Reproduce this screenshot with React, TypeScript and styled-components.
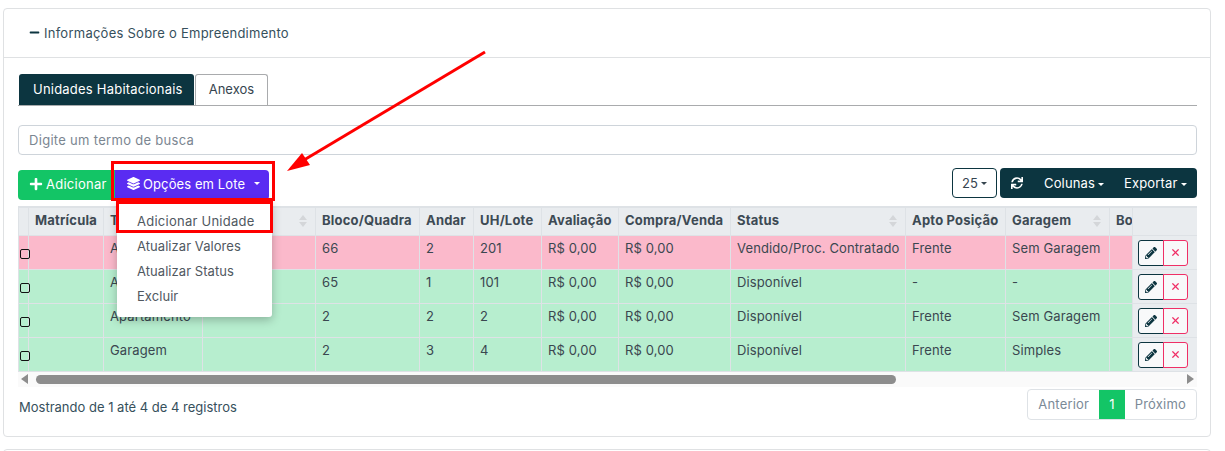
import React from "react";
import styled, { createGlobalStyle } from "styled-components";
import { FaLayerGroup, FaPencilAlt, FaPlus, FaSync, FaMinus } from "react-icons/fa";
import { X } from "lucide-react";

const Global = createGlobalStyle`
  html, body { margin: 0; padding: 0; background: #fff; }
  body { font-family: Inter, "Open Sans", sans-serif; font-size: 13px; color: #36454f; overflow: hidden; }
  * { box-sizing: border-box; }
`;
const Page = styled.div`
  position: relative; width: 1225px; height: 451px; overflow: hidden;
  padding: 8px 14px 0 3px;
`;
const Card = styled.section`
  border: 1px solid #dfe1e3; border-radius: 4px; height: 429px; background: #fff;
`;
const NextCard = styled(Card)`margin-top: 12px;`;
const CardHeader = styled.header`
  height: 49px; border-bottom: 1px solid #dfe1e3; display: flex; align-items: center;
  padding: 0 0 1px 25px; gap: 4px; color: #36505c; font-size: 13px; letter-spacing: .25px;
  svg { color: #0c3540; font-size: 11px; }
`;
const CardBody = styled.div`padding: 16px 13px 0 14px;`;
const Tabs = styled.div`
  display: flex; height: 32px; border-bottom: 1px solid #a9abad; gap: 1px; padding-left: 1px;
`;
const Tab = styled.div<{ $active?: boolean }>`
  height: 31px; display: flex; align-items: center; padding: 0 13px 2px;
  font-size: 13px; letter-spacing: .22px; border-radius: 3px 3px 0 0;
  ${p => p.$active ? "background:#0c3540;color:#fff;padding:0 11px 2px 14px;" : "border:1px solid #a9abad;border-bottom:0;color:#36454f;letter-spacing:0;"}
`;
const Search = styled.div`
  margin-top: 19px; height: 30px; border: 1px solid #ced4da; border-radius: 4px;
  padding: 0 10px 1px; display: flex; align-items: center; color: #7b8691; font-size: 13px; letter-spacing: .3px;
`;
const Toolbar = styled.div`
  margin-top: 13px; height: 32px; display: flex; justify-content: space-between;
`;
const LeftGroup = styled.div`display: flex; align-items: flex-end;`;
const RightGroup = styled.div`display: flex; align-items: flex-start;`;
const AddBtn = styled.div`
  width: 97px; height: 30px; background: #13c566; color: #fff; border-radius: 4px 0 0 4px;
  display: flex; align-items: center; padding: 0 0 3px 11px; gap: 3px; font-size: 13px; letter-spacing: .25px;
  svg { font-size: 14px; }
`;
const BatchBtn = styled.div`
  width: 154px; height: 30px; background: #5a2cf2; color: #fff; border-radius: 0 4px 4px 0;
  display: flex; align-items: center; padding: 0 0 3px 12px; gap: 3px; font-size: 13px; letter-spacing: .1px;
  svg { font-size: 13px; }
`;
const Caret = styled.i`
  display: inline-block; width: 0; height: 0; border: 3px solid transparent; border-top-color: currentColor;
  border-bottom: 0; margin-left: 3px; vertical-align: 2px;
`;
const BatchCaret = styled(Caret)`margin-left: 6px;`;
const PageSize = styled.div`
  width: 45px; height: 30px; border: 1px solid #0c3540; border-radius: 4px; display: flex;
  align-items: center; justify-content: center; font-size: 13px; margin-right: 3px; color: #36454f;
`;
const DarkGroup = styled.div`
  width: 197px; height: 30px; background: #0c3540; border-radius: 4px; color: #fff; display: flex;
  align-items: center; font-size: 13px; padding-left: 11px; white-space: nowrap; letter-spacing: .15px;
  svg { font-size: 12px; margin-right: 21px; flex-shrink: 0; }
  span { margin-right: 20px; flex-shrink: 0; }
  span:last-child { margin-right: 0; }
`;
const TableWrap = styled.div`margin-top: 6px; width: 1179px; overflow: hidden;`;
const Grid = styled.table`
  border-collapse: collapse; table-layout: fixed; width: 1179px; font-size: 13px;
`;
const Th = styled.th<{ $sort?: boolean }>`
  height: 28px; background: #e9ecef; border: 1px solid #dee2e6; border-top: 2px solid #dee2e6; text-align: left;
  padding: 0 6px 2px; font-weight: 700; font-size: 13px; color: #3d4a54; white-space: nowrap; overflow: hidden;
  position: relative; letter-spacing: .2px;
  ${p => p.$sort ? `
  &::after { content: ""; position: absolute; right: 8px; top: 7px; border: 4px solid transparent; border-top: 0; border-bottom: 5px solid rgba(0,0,0,.09); }
  &::before { content: ""; position: absolute; right: 8px; top: 14px; border: 4px solid transparent; border-bottom: 0; border-top: 5px solid rgba(0,0,0,.09); }` : ""}
`;
const Tr = styled.tr<{ $color: string }>`background: ${p => p.$color};`;
const Td = styled.td`
  height: 34px; border: 1px solid #dee2e6; padding: 0 6px 8px; color: #3a4750; white-space: nowrap; overflow: hidden; font-size: 13px;
  letter-spacing: .12px;
`;
const CheckCell = styled.td`
  height: 34px; border: 1px solid #dee2e6; padding: 0; vertical-align: bottom;
`;
const Check = styled.div`
  position: relative; z-index: 1;
  width: 10px; height: 10px; border: 1.5px solid #111; border-radius: 2px; margin: 0 0 10px 1px;
`;
const ActionCell = styled.td`
  height: 34px; border: 1px solid #dee2e6; background: #e9ecef; padding: 4px 0 0 5px; vertical-align: top;
`;
const Actions = styled.div`display: flex; width: 50px; height: 26px;`;
const EditBtn = styled.div`
  width: 26px; height: 26px; background: #f8f9fa; border: 1px solid #0c3540; border-radius: 3px 0 0 3px;
  display: flex; align-items: center; justify-content: center; color: #0c3540; font-size: 12px;
`;
const DelBtn = styled.div`
  width: 25px; height: 26px; background: #f8f9fa; border: 1px solid #ef2f66; border-radius: 0 3px 3px 0;
  display: flex; align-items: center; justify-content: center; color: #ef2f66; margin-left: -1px;
`;
const Scrollbar = styled.div`
  height: 15px; background: #fafafa; display: flex; align-items: center; padding: 0 3px; gap: 8px;
`;
const ScrollArrow = styled.i<{ $right?: boolean }>`
  width: 0; height: 0; border-style: solid; border-width: 5px 0;
  border-color: transparent #8d8d8d;
  ${p => p.$right ? "border-left-width: 7px; margin-left: auto;" : "border-right-width: 7px;"}
`;
const Thumb = styled.div`width: 860px; height: 9px; background: #8d8d8d; border-radius: 5px;`;
const Footer = styled.div`display: flex; justify-content: space-between; align-items: flex-start; margin-top: 2px;`;
const Info = styled.div`padding: 10px 0 0 1px; font-size: 13px; color: #36505c;`;
const Pager = styled.div`
  display: flex; height: 31px; border: 1px solid #dee2e6; border-radius: 4px; overflow: hidden; color: #7b8a97; font-size: 13px;
  letter-spacing: .2px;
`;
const PageLink = styled.div<{ $active?: boolean }>`
  display: flex; align-items: center; padding: 0 10px;
  ${p => p.$active ? "background:#13c566;color:#fff;" : ""}
`;
const Menu = styled.div`
  position: absolute; left: 117px; top: 201px; width: 155px; height: 116px; background: #fff;
  border-radius: 0 0 3px 3px; box-shadow: 0 3px 10px rgba(0,0,0,.25); padding: 7px 0 0 20px; z-index: 2;
`;
const MenuItem = styled.div`height: 25px; display: flex; align-items: center; font-size: 13px; color: #50585f; letter-spacing: .05px;`;
const FirstItem = styled(MenuItem)`letter-spacing: .25px;`;
const Mark = styled.div<{ $l: number; $t: number; $w: number; $h: number }>`
  position: absolute; left: ${p => p.$l}px; top: ${p => p.$t}px; width: ${p => p.$w}px; height: ${p => p.$h}px;
  border: 3px solid #f00; z-index: 3; pointer-events: none;
`;
const Arrow = styled.svg`position: absolute; left: 270px; top: 40px; z-index: 3;`;

const cols = [10, 75, 99, 113, 104, 54, 68, 77, 112, 175, 100, 104, 23, 65];
const heads: [string, boolean][] = [["", false], ["Matrícula", true], ["Tipo", true], ["Imóvel", true], ["Bloco/Quadra", false], ["Andar", false], ["UH/Lote", false], ["Avaliação", false], ["Compra/Venda", false], ["Status", true], ["Apto Posição", true], ["Garagem", true], ["Bo", false], ["", false]];
const rows: { c: string; cells: string[] }[] = [
  { c: "#fbb9cb", cells: ["", "Apartamento", "", "66", "2", "201", "R$ 0,00", "R$ 0,00", "Vendido/Proc. Contratado", "Frente", "Sem Garagem", ""] },
  { c: "#b7eecf", cells: ["", "Apartamento", "", "65", "1", "101", "R$ 0,00", "R$ 0,00", "Disponível", "-", "-", ""] },
  { c: "#b7eecf", cells: ["", "Apartamento", "", "2", "2", "2", "R$ 0,00", "R$ 0,00", "Disponível", "Frente", "Sem Garagem", ""] },
  { c: "#b7eecf", cells: ["", "Garagem", "", "2", "3", "4", "R$ 0,00", "R$ 0,00", "Disponível", "Frente", "Simples", ""] },
];

export default function App() {
  return (
    <Page>
      <Global />
      <Card>
        <CardHeader><FaMinus /> Informações Sobre o Empreendimento</CardHeader>
        <CardBody>
          <Tabs>
            <Tab $active>Unidades Habitacionais</Tab>
            <Tab>Anexos</Tab>
          </Tabs>
          <Search>Digite um termo de busca</Search>
          <Toolbar>
            <LeftGroup>
              <AddBtn><FaPlus /> Adicionar</AddBtn>
              <BatchBtn><FaLayerGroup /> Opções em Lote <BatchCaret /></BatchBtn>
            </LeftGroup>
            <RightGroup>
              <PageSize>25<Caret /></PageSize>
              <DarkGroup>
                <FaSync />
                <span>Colunas<Caret /></span>
                <span>Exportar<Caret /></span>
              </DarkGroup>
            </RightGroup>
          </Toolbar>
          <TableWrap>
            <Grid>
              <colgroup>{cols.map((w, i) => <col key={i} style={{ width: w }} />)}</colgroup>
              <thead><tr>{heads.map(([h, s], i) => <Th key={i} $sort={s}>{h}</Th>)}</tr></thead>
              <tbody>
                {rows.map((r, i) => (
                  <Tr key={i} $color={r.c}>
                    <CheckCell><Check /></CheckCell>
                    {r.cells.map((c, j) => <Td key={j}>{c}</Td>)}
                    <ActionCell>
                      <Actions>
                        <EditBtn><FaPencilAlt /></EditBtn>
                        <DelBtn><X size={11} strokeWidth={2.6} /></DelBtn>
                      </Actions>
                    </ActionCell>
                  </Tr>
                ))}
              </tbody>
            </Grid>
            <Scrollbar>
              <ScrollArrow />
              <Thumb />
              <ScrollArrow $right />
            </Scrollbar>
          </TableWrap>
          <Footer>
            <Info>Mostrando de 1 até 4 de 4 registros</Info>
            <Pager>
              <PageLink>Anterior</PageLink>
              <PageLink $active>1</PageLink>
              <PageLink>Próximo</PageLink>
            </Pager>
          </Footer>
        </CardBody>
      </Card>
      <NextCard />
      <Menu>
        <FirstItem>Adicionar Unidade</FirstItem>
        <MenuItem>Atualizar Valores</MenuItem>
        <MenuItem>Atualizar Status</MenuItem>
        <MenuItem>Excluir</MenuItem>
      </Menu>
      <Mark $l={111} $t={161} $w={164} $h={40} />
      <Mark $l={116} $t={201} $w={157} $h={32} />
      <Arrow width="230" height="140" viewBox="270 40 230 140">
        <line x1="485" y1="52" x2="304" y2="160" stroke="#f00" strokeWidth="3" />
        <polygon points="287,171 302,153 310,165" fill="#f00" />
      </Arrow>
    </Page>
  );
}
